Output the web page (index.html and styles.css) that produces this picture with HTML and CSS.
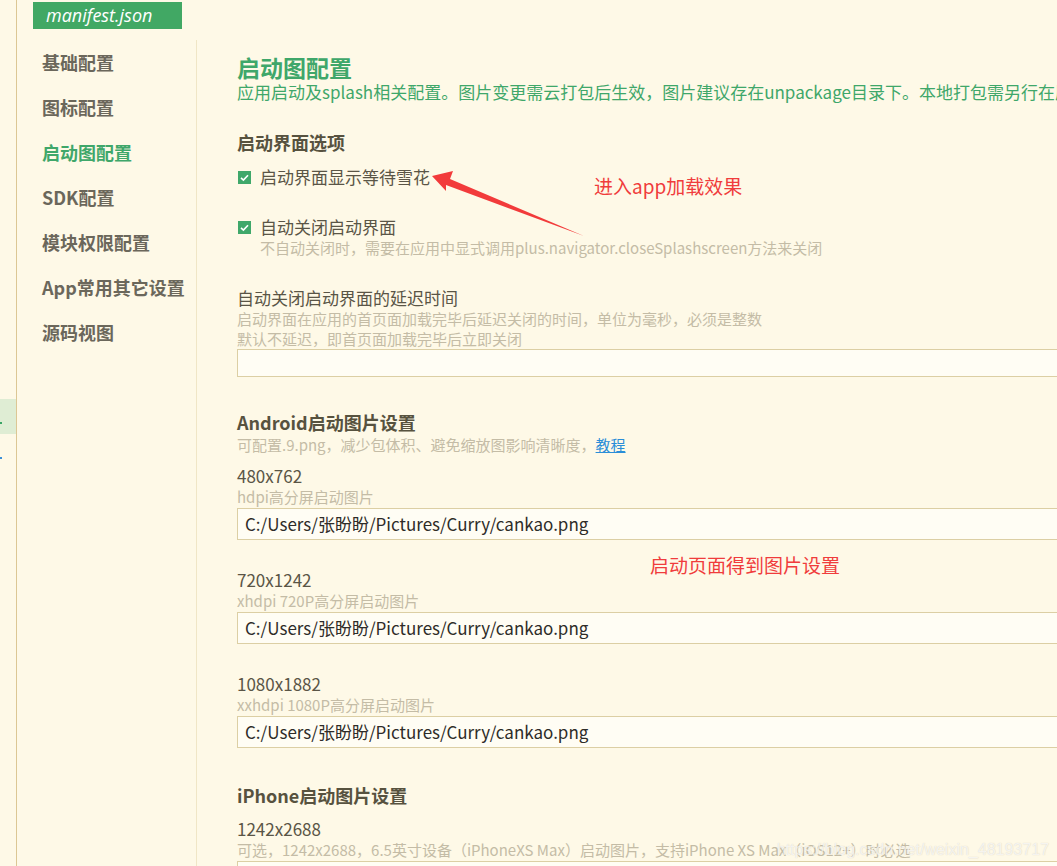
FILE: index.html
```html
<!DOCTYPE html>
<html lang="zh-CN">
<head>
<meta charset="utf-8">
<title>manifest.json</title>
<link rel="stylesheet" href="styles.css">
</head>
<body>
<div class="app">
  <div class="gutter">
    <div class="gutter-hl"><i class="dot dot-green"></i></div>
    <i class="dot dot-blue"></i>
  </div>
  <div class="main">
    <div class="tabs"><div class="tab">manifest.json</div></div>
    <div class="body">
      <nav class="nav">
        <div class="nav-item">基础配置</div>
        <div class="nav-item">图标配置</div>
        <div class="nav-item active">启动图配置</div>
        <div class="nav-item">SDK配置</div>
        <div class="nav-item">模块权限配置</div>
        <div class="nav-item">App常用其它设置</div>
        <div class="nav-item">源码视图</div>
      </nav>
      <div class="content">
        <h1 class="title">启动图配置</h1>
        <div class="subtitle">应用启动及splash相关配置。图片变更需云打包后生效，图片建议存在unpackage目录下。本地打包需另行在原生工程中配置</div>

        <h2 class="section">启动界面选项</h2>
        <div class="check-row first"><span class="cb"><svg viewBox="0 0 13 13" width="13" height="13"><path d="M3 6.8 L5.4 9.1 L10 4.2" fill="none" stroke="#fff" stroke-width="1.6"/></svg></span><span class="cb-label">启动界面显示等待雪花</span></div>
        <div class="check-row second"><span class="cb"><svg viewBox="0 0 13 13" width="13" height="13"><path d="M3 6.8 L5.4 9.1 L10 4.2" fill="none" stroke="#fff" stroke-width="1.6"/></svg></span><span class="cb-label">自动关闭启动界面</span></div>
        <div class="desc indent">不自动关闭时，需要在应用中显式调用plus.navigator.closeSplashscreen方法来关闭</div>

        <div class="field delay">
          <div class="label">自动关闭启动界面的延迟时间</div>
          <div class="desc">启动界面在应用的首页面加载完毕后延迟关闭的时间，单位为毫秒，必须是整数</div>
          <div class="desc">默认不延迟，即首页面加载完毕后立即关闭</div>
          <div class="input small"></div>
        </div>

        <h2 class="section android">Android启动图片设置</h2>
        <div class="desc">可配置.9.png，减少包体积、避免缩放图影响清晰度，<a class="link">教程</a></div>

        <div class="field first-size">
          <div class="label">480x762</div>
          <div class="desc">hdpi高分屏启动图片</div>
          <div class="input">C:/Users/张盼盼/Pictures/Curry/cankao.png</div>
        </div>
        <div class="field">
          <div class="label">720x1242</div>
          <div class="desc">xhdpi 720P高分屏启动图片</div>
          <div class="input">C:/Users/张盼盼/Pictures/Curry/cankao.png</div>
        </div>
        <div class="field">
          <div class="label">1080x1882</div>
          <div class="desc">xxhdpi 1080P高分屏启动图片</div>
          <div class="input">C:/Users/张盼盼/Pictures/Curry/cankao.png</div>
        </div>

        <h2 class="section iphone">iPhone启动图片设置</h2>
        <div class="field first-size">
          <div class="label">1242x2688</div>
          <div class="desc">可选，1242x2688，6.5英寸设备（iPhoneXS Max）启动图片，支持iPhone XS Max（iOS12+）时必选</div>
          <div class="input"></div>
        </div>
      </div>
    </div>
  </div>
</div>

<svg class="arrow" width="1057" height="866" viewBox="0 0 1057 866">
  <polygon points="432,176 453,171 450,179 584,236 446,185 446,191" fill="#f23b3b"/>
</svg>
<div class="note note-1">进入app加载效果</div>
<div class="note note-2">启动页面得到图片设置</div>
<div class="watermark">https://blog.csdn.net/weixin_48193717</div>
</body>
</html>
```

FILE: styles.css
```css
* { box-sizing: border-box; }
html, body {
  margin: 0;
  padding: 0;
  width: 1057px;
  height: 866px;
  overflow: hidden;
  background: #fef9e7;
  font-family: "Noto Sans CJK SC", "Noto Sans", sans-serif;
  color: #5a5546;
}
.app {
  display: flex;
  height: 866px;
}
.gutter {
  width: 17px;
  flex: none;
  border-right: 1px solid #dcc794;
  display: flex;
  flex-direction: column;
}
.gutter-hl {
  margin-top: 399px;
  height: 35px;
  background: #dfedd4;
  position: relative;
}
.dot {
  display: block;
  width: 2px;
  height: 2px;
}
.dot-green {
  background: #3aa565;
  margin-top: 23px;
}
.dot-blue {
  background: #3b8fd6;
  margin-top: 23px;
}
.main {
  flex: 1;
  min-width: 0;
  display: flex;
  flex-direction: column;
}
.tabs {
  height: 40px;
  padding: 2px 0 0 16px;
  flex: none;
}
.tab {
  width: 149px;
  height: 27px;
  background: #41a864;
  color: #fff;
  font-style: italic;
  font-size: 18px;
  line-height: 27px;
  padding-left: 13px;
  font-family: "Open Sans", "Noto Sans", sans-serif;
}
.body {
  flex: 1;
  display: flex;
  min-height: 0;
}
.nav {
  width: 180px;
  flex: none;
  border-right: 1px solid #f0e6c6;
  padding-left: 25px;
}
.nav-item {
  font-size: 18px;
  font-weight: bold;
  line-height: 45px;
  color: #6b675b;
  white-space: nowrap;
}
.nav-item.active { color: #3fa76a; }
.content {
  flex: 1;
  min-width: 0;
  overflow: hidden;
  padding: 12px 0 0 40px;
}
.title {
  margin: 0;
  font-size: 23px;
  font-weight: bold;
  line-height: 30px;
  color: #3fa76a;
}
.subtitle {
  font-size: 17px;
  line-height: 20px;
  color: #3fa76a;
  white-space: nowrap;
}
.section {
  margin: 28px 0 0;
  font-size: 18px;
  font-weight: bold;
  line-height: 24px;
  color: #57523f;
  white-space: nowrap;
}
.section.android { margin-top: 32px; line-height: 26px; }
.section.iphone { margin-top: 34px; line-height: 26px; }
.check-row {
  display: flex;
  align-items: center;
  height: 22px;
}
.check-row.first { margin-top: 12px; }
.check-row.second { margin-top: 28px; }
.cb {
  width: 13px;
  height: 13px;
  background: #3fa86a;
  margin-left: 1px;
  display: flex;
}
.cb-label {
  margin-left: 9px;
  font-size: 17px;
  line-height: 22px;
  color: #5a5546;
}
.desc {
  font-size: 15px;
  line-height: 20px;
  color: #c4bca6;
  white-space: nowrap;
}
.desc.indent { padding-left: 23px; }
.link {
  color: #2a8ed8;
  text-decoration: underline;
}
.field { margin-top: 29px; }
.field.first-size { margin-top: 10px; }
.label {
  font-size: 17px;
  line-height: 22px;
  color: #5a5546;
  white-space: nowrap;
}
.input {
  margin-right: -30px;
  height: 32px;
  margin-top: 1px;
  background: #fffdf4;
  border: 1px solid #dccfa4;
  font-size: 17px;
  line-height: 30px;
  padding-left: 7px;
  color: #2e2c28;
  white-space: nowrap;
}
.input.small {
  height: 28px;
  margin-top: 0;
}
.arrow {
  position: absolute;
  left: 0;
  top: 0;
  pointer-events: none;
}
.note {
  position: absolute;
  font-size: 19px;
  line-height: 24px;
  color: #f03c3c;
  white-space: nowrap;
}
.note-1 { left: 594px; top: 174px; }
.note-2 { left: 650px; top: 553px; }
.watermark {
  position: absolute;
  left: 777px;
  top: 839px;
  font-family: "Liberation Sans Narrow", "Liberation Sans", sans-serif;
  font-size: 16px;
  line-height: 22px;
  color: rgba(255, 255, 255, 0.75);
  text-shadow: 0 0 1px rgba(160, 150, 130, 0.45);
  white-space: nowrap;
}
```
